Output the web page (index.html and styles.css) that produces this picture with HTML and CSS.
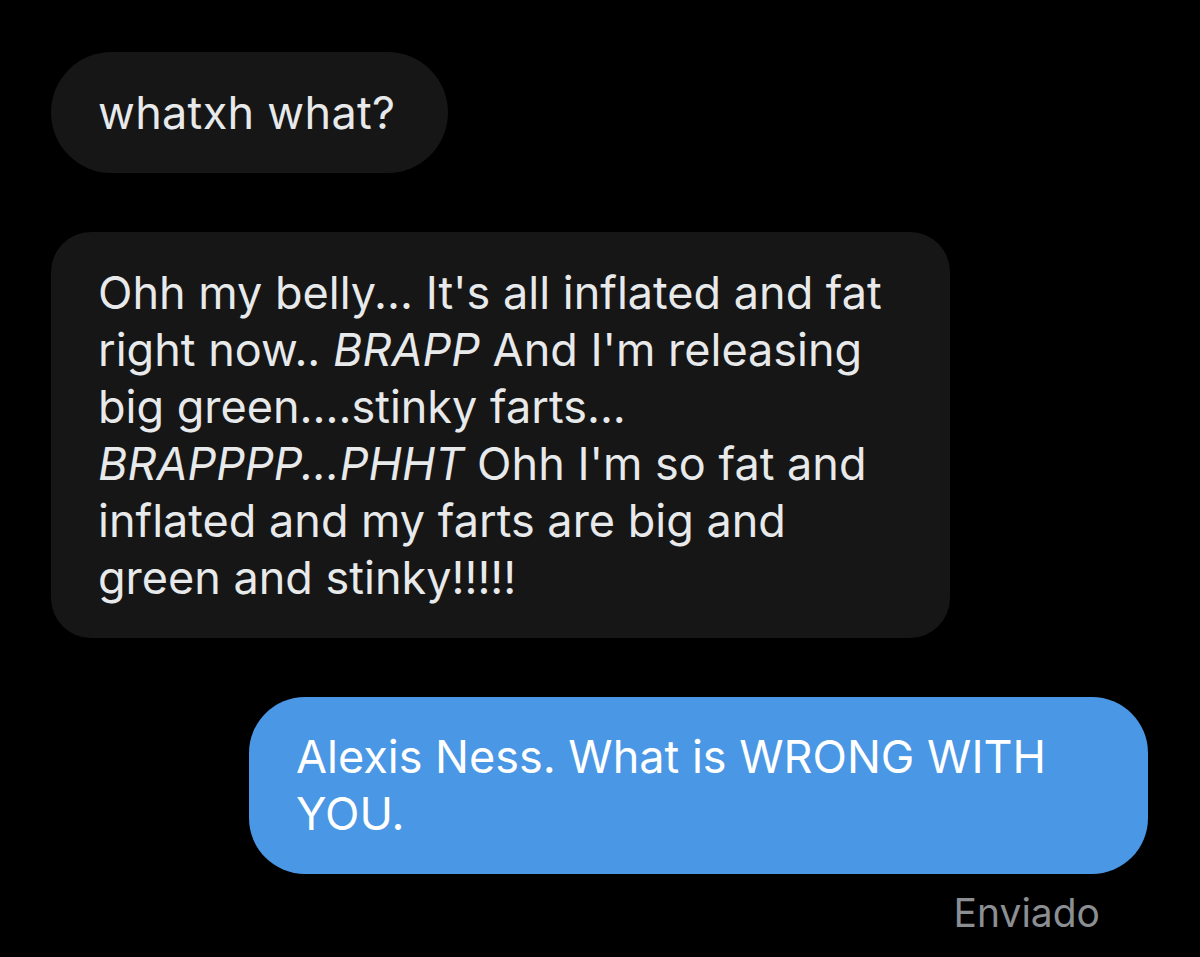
FILE: index.html
```html
<!DOCTYPE html>
<html>
<head>
<meta charset="utf-8">
<link rel="stylesheet" href="styles.css">
</head>
<body>
<main class="chat">
  <div class="msg in">
    <div class="bubble">whatxh what?</div>
  </div>
  <div class="msg in">
    <div class="bubble">Ohh my belly... It's all inflated and fat right now.. <em>BRAPP</em> And I'm releasing big green....stinky farts... <em>BRAPPPP...PHHT</em> Ohh I'm so fat and inflated and my farts are big and green and stinky!!!!!</div>
  </div>
  <div class="msg out">
    <div class="bubble">Alexis Ness. What is WRONG WITH YOU.</div>
    <div class="status">Enviado</div>
  </div>
</main>
</body>
</html>
```
FILE: styles.css
```css
html, body {
  margin: 0;
  background: #000;
}
body {
  width: 1200px;
  height: 957px;
  overflow: hidden;
  font-family: Inter, "Liberation Sans", sans-serif;
}
.chat {
  display: flex;
  flex-direction: column;
  gap: 59px;
  padding: 52px 52px 0 51px;
}
.msg {
  display: flex;
  flex-direction: column;
}
.msg.in { align-items: flex-start; }
.msg.out { align-items: flex-end; }
.bubble {
  max-width: 805px;
  padding: 32px 47px;
  font-size: 45px;
  line-height: 57px;
  color: #e7e9ea;
  background: #161616;
  border-radius: 40px;
}
.msg.in:first-child .bubble {
  border-radius: 61px;
  padding-right: 53px;
  letter-spacing: 0.3px;
}
.bubble em { font-style: italic; }
.msg.out .bubble {
  background: #4a97e5;
  color: #fff;
  border-radius: 56px;
  padding: 31px 47px 32px;
}
.status {
  margin-top: 19px;
  margin-right: 48px;
  font-size: 39px;
  line-height: 40px;
  color: #8b8e92;
}
```
